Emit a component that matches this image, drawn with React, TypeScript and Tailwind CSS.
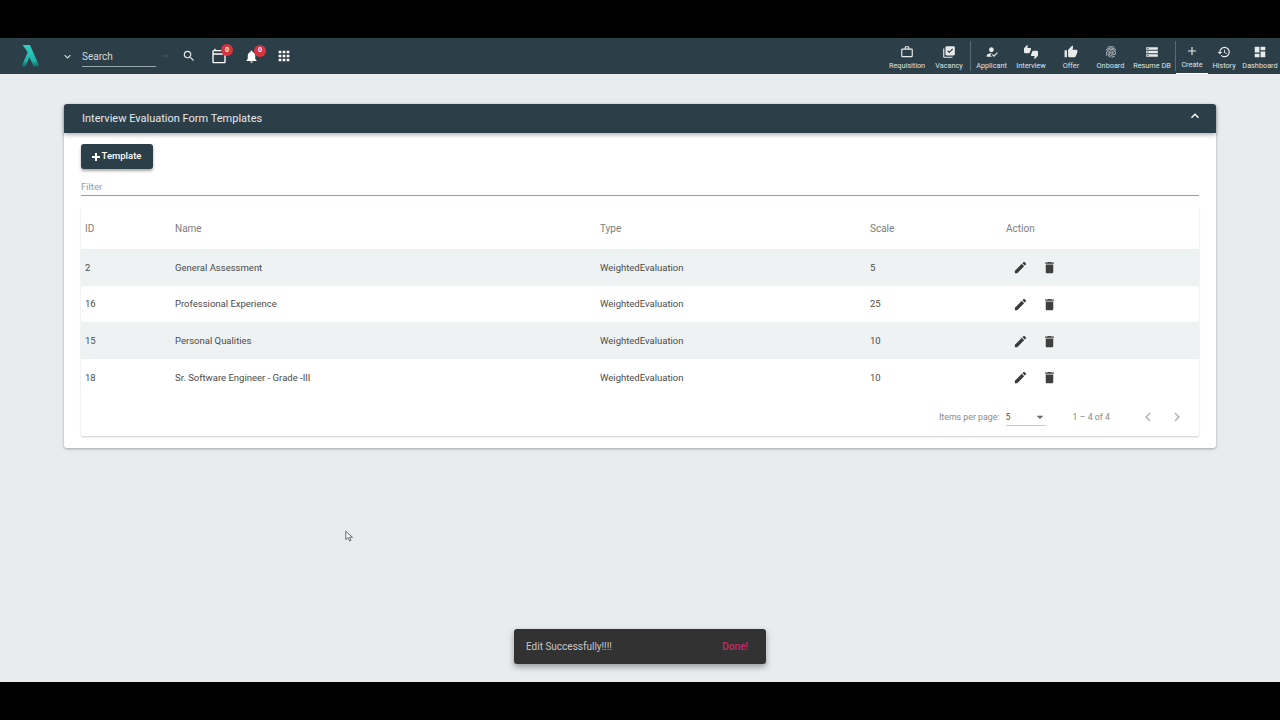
import {
  MdAdd,
  MdApps,
  MdArrowDropDown,
  MdChevronLeft,
  MdChevronRight,
  MdDashboard,
  MdDelete,
  MdEdit,
  MdExpandLess,
  MdExpandMore,
  MdHistory,
  MdHowToReg,
  MdLibraryAddCheck,
  MdNotifications,
  MdOutlineCalendarToday,
  MdOutlineWorkOutline,
  MdSearch,
  MdStorage,
  MdThumbUp,
  MdThumbsUpDown,
  MdFingerprint,
  MdArrowRightAlt,
} from "react-icons/md";
import type { IconType } from "react-icons";

const navItems: { label: string; icon: IconType; width: string; divider?: boolean; active?: boolean }[] = [
  { label: "Requisition", icon: MdOutlineWorkOutline, width: "w-[42px]" },
  { label: "Vacancy", icon: MdLibraryAddCheck, width: "w-[42px]" },
  { label: "Applicant", icon: MdHowToReg, width: "w-[41px]", divider: true },
  { label: "Interview", icon: MdThumbsUpDown, width: "w-[38px]" },
  { label: "Offer", icon: MdThumbUp, width: "w-[42px]" },
  { label: "Onboard", icon: MdFingerprint, width: "w-[37px]" },
  { label: "Resume DB", icon: MdStorage, width: "w-[46px]" },
  { label: "Create", icon: MdAdd, width: "w-[32px]", divider: true, active: true },
  { label: "History", icon: MdHistory, width: "w-[32px]" },
  { label: "Dashboard", icon: MdDashboard, width: "w-[40px]" },
];

const rows = [
  { id: "2", name: "General Assessment", type: "WeightedEvaluation", scale: "5" },
  { id: "16", name: "Professional Experience", type: "WeightedEvaluation", scale: "25" },
  { id: "15", name: "Personal Qualities", type: "WeightedEvaluation", scale: "10" },
  { id: "18", name: "Sr. Software Engineer - Grade -III", type: "WeightedEvaluation", scale: "10" },
];

function Badge() {
  return (
    <span className="absolute left-[10px] top-[-4px] flex h-[12px] w-[12px] items-center justify-center rounded-full bg-[#d9333f] text-[7px] font-bold text-white">
      0
    </span>
  );
}

function TopNav() {
  return (
    <header className="flex h-[36px] items-center bg-[#2c3e47] text-white">
      {/* Logo */}
      <svg viewBox="0 0 24 28" className="ml-[19px] h-[28px] w-[22px]">
        <defs>
          <linearGradient id="logoFill" x1="0" y1="0" x2="0" y2="1">
            <stop offset="0" stopColor="#2fd0c2" />
            <stop offset="0.7" stopColor="#22b5aa" />
            <stop offset="1" stopColor="#14605f" />
          </linearGradient>
        </defs>
        <path d="M4 2 L12 2 L22 25 L16 26 L11.5 15 L7 26 L3 25 L9.5 10 Z" fill="url(#logoFill)" />
      </svg>
      <MdExpandMore className="ml-[20px] text-[13px] text-[#dfe4e6]" />
      <div className="ml-[8px] flex h-[22px] w-[74px] items-center border-b border-[#9aa6ab] pt-[2px] text-[10px] text-[#d4dadc]">
        Search
      </div>
      <MdArrowRightAlt className="ml-[3px] text-[12px] text-[#44565e]" />
      <MdSearch className="ml-[11px] text-[14px] text-[#e6e9ea]" />
      <div className="relative ml-[15px]">
        <MdOutlineCalendarToday className="text-[16px] text-white" />
        <Badge />
      </div>
      <div className="relative ml-[17px]">
        <MdNotifications className="text-[15px] text-white" />
        <Badge />
      </div>
      <MdApps className="ml-[17px] text-[16px] text-white" />

      <nav className="ml-auto flex h-full items-stretch">
        {navItems.map((item) => (
          <div key={item.label} className="flex">
            {item.divider && <div className="my-[3px] w-px bg-[#5a6b73]" />}
            <div
              className={`flex ${item.width} flex-col items-center justify-end whitespace-nowrap pb-[3px] ${
                item.active ? "border-b border-white" : ""
              }`}
            >
              <item.icon className="text-[14px] text-[#e8ebec]" />
              <span className="mt-[2px] text-[7.3px] leading-[10px] text-[#dfe4e6]">{item.label}</span>
            </div>
          </div>
        ))}
      </nav>
    </header>
  );
}

function TemplatesTable() {
  return (
    <div className="mt-[12px] rounded-b-[2px] bg-white shadow-[0_1px_2px_rgba(0,0,0,0.2)]">
      <div className="flex h-[41px] items-center text-[10px] text-[#7d7d7d]">
        <span className="w-[94px] pl-[4px]">ID</span>
        <span className="w-[425px]">Name</span>
        <span className="w-[270px]">Type</span>
        <span className="w-[136px]">Scale</span>
        <span>Action</span>
      </div>
      {rows.map((row, i) => (
        <div
          key={row.id}
          className={`flex h-[36.7px] items-center pt-[1px] text-[9.5px] text-[#4b4b4b] ${
            i % 2 === 0 ? "bg-[#eff2f3]" : "bg-white"
          }`}
        >
          <span className="w-[94px] pl-[4px]">{row.id}</span>
          <span className="w-[425px]">{row.name}</span>
          <span className="w-[270px]">{row.type}</span>
          <span className="w-[136px]">{row.scale}</span>
          <div className="flex items-center">
            <MdEdit className="ml-[7px] text-[15px] text-[#3a3a3a]" />
            <MdDelete className="ml-[14px] text-[15px] text-[#3f3f3f]" />
          </div>
        </div>
      ))}
      <div className="flex h-[40px] items-center justify-end pt-[3px] text-[8.8px] text-[#8a8a8a]">
        <span>Items per page:</span>
        <div className="ml-[6px] flex h-[17px] w-[40px] items-center justify-between border-b border-[#c9c9c9] pt-[1px] text-[#555]">
          <span>5</span>
          <MdArrowDropDown className="mr-[-2px] text-[16px] text-[#666]" />
        </div>
        <span className="ml-[27px]">1 – 4 of 4</span>
        <MdChevronLeft className="ml-[29px] text-[18px] text-[#b5b5b5]" />
        <MdChevronRight className="ml-[11px] mr-[13px] text-[18px] text-[#b5b5b5]" />
      </div>
    </div>
  );
}

export default function App() {
  return (
    <div className="relative flex h-[720px] w-[1280px] flex-col overflow-hidden bg-black font-['Roboto',sans-serif]">
      <div className="h-[38px] shrink-0" />
      <TopNav />
      <main className="h-[608px] shrink-0 bg-[#e8ecef] px-[64px] pt-[30px]">
        <section className="rounded-[3px] bg-white shadow-[0_1px_3px_rgba(0,0,0,0.3)]">
          <div className="flex h-[29px] items-center justify-between rounded-t-[3px] bg-[#2c3e47] pl-[18px] pr-[13px] pt-[1px] text-[11px] text-[#e6eaeb] shadow-[0_2px_4px_rgba(0,0,0,0.3)]">
            <span>Interview Evaluation Form Templates</span>
            <MdExpandLess className="mb-[6px] text-[16px] text-white" />
          </div>
          <div className="px-[17px] pb-[12px] pt-[11px]">
            <button className="flex h-[25px] w-[72px] items-center justify-center gap-[2px] rounded-[3px] bg-[#2c3e47] pr-[1px] text-[9.5px] font-medium text-white shadow-[0_2px_3px_rgba(0,0,0,0.35)]">
              <svg viewBox="0 0 8 8" className="h-[8px] w-[8px]">
                <path d="M4 0V8M0 4H8" stroke="currentColor" strokeWidth="2" fill="none" />
              </svg>
              Template
            </button>
            <div className="mt-[10px] flex h-[17px] items-center border-b border-[#9a9a9a] pt-[1px] text-[9.5px] text-[#9a9a9a]">
              Filter
            </div>
            <TemplatesTable />
          </div>
        </section>
      </main>

      {/* Snackbar */}
      <div className="absolute left-[514px] top-[629px] flex h-[35px] w-[252px] items-center justify-between rounded-[3px] bg-[#323232] pl-[12px] pr-[18px] text-[10px] shadow-[0_3px_6px_rgba(0,0,0,0.35)]">
        <span className="text-[#c9c9c9]">Edit Successfully!!!!</span>
        <span className="font-medium text-[#c42a6a]">Done!</span>
      </div>

      {/* Mouse cursor */}
      <svg viewBox="0 0 12 16" className="absolute left-[345px] top-[530px] h-[13px] w-[9px]">
        <path d="M1 1 L1 12 L4 9.5 L6 14 L8 13 L6 9 L10 9 Z" fill="#f4f4f4" stroke="#444" strokeWidth="1" />
      </svg>
    </div>
  );
}
